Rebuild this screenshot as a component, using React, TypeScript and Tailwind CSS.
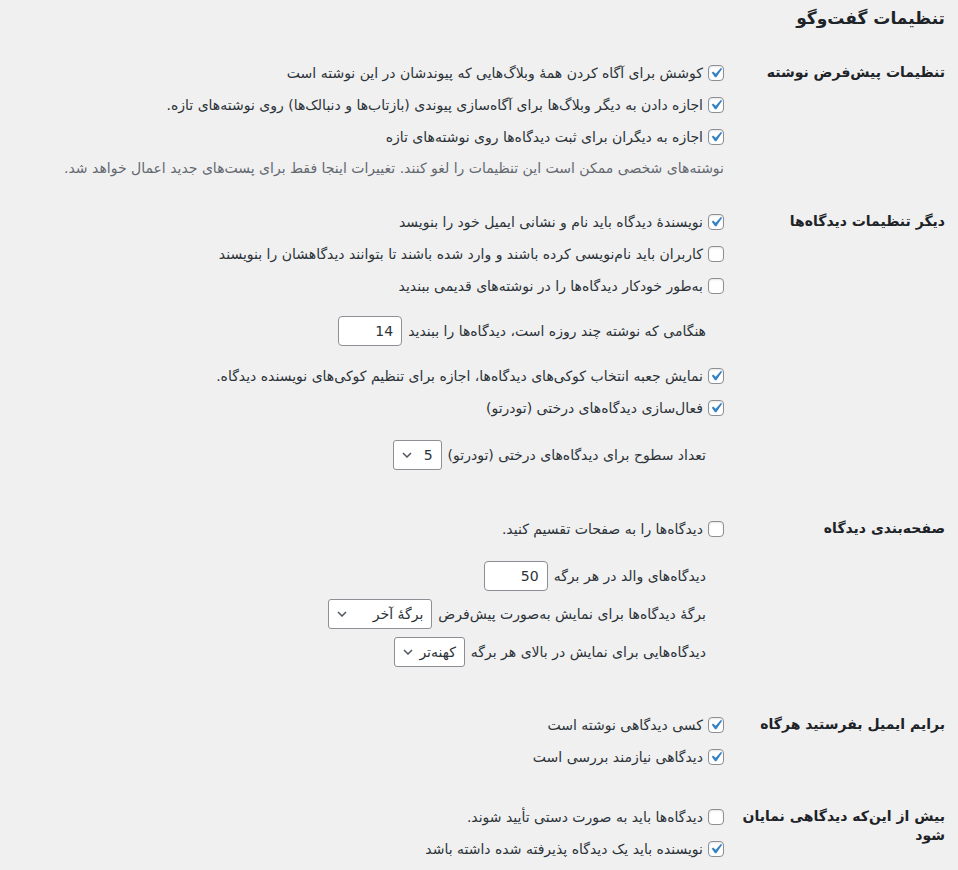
import React from 'react'

type Row =
  | { kind: 'check'; checked: boolean; text: string }
  | { kind: 'desc'; text: string }
  | { kind: 'input'; text: string; value: string }
  | { kind: 'select'; text: string; value: string; width: string }

function Checkbox({ checked }: { checked: boolean }) {
  return (
    <span className="relative w-4 h-4 shrink-0 rounded-[4px] border border-[#8c8f94] bg-white shadow-[inset_0_1px_2px_rgba(0,0,0,0.1)]">
      {checked && (
        <svg viewBox="0 0 20 20" className="absolute -top-[3px] -left-[3px] w-[20px] h-[20px]">
          <path d="M14.83 4.89l1.34.94-5.81 8.38H9.02L5.78 9.67l1.34-1.25 2.57 2.4z" fill="#3582c4" />
        </svg>
      )}
    </span>
  )
}

function Chevron() {
  return (
    <svg viewBox="0 0 10 6" className="w-[10px] h-[6px] shrink-0">
      <path d="M1 1l4 4 4-4" fill="none" stroke="#50575e" strokeWidth="1.5" />
    </svg>
  )
}

function Field({ row }: { row: Row }) {
  if (row.kind === 'check') {
    return (
      <div className="h-8 flex items-center gap-[5px]">
        <Checkbox checked={row.checked} />
        <span>{row.text}</span>
      </div>
    )
  }
  if (row.kind === 'desc') {
    return <div className="h-[30px] flex items-center text-[#646970]">{row.text}</div>
  }
  if (row.kind === 'input') {
    return (
      <div className="flex items-center gap-[6px] pr-[18px]">
        <span>{row.text}</span>
        <div className="w-[64px] h-[30px] px-2 flex items-center rounded-[4px] border border-[#8c8f94] bg-white text-[14px] text-[#2c3338]">
          {row.value}
        </div>
      </div>
    )
  }
  return (
    <div className="flex items-center gap-[6px] pr-[18px]">
      <span>{row.text}</span>
      <div className={`${row.width} h-[30px] pr-2 pl-[8px] flex items-center justify-between rounded-[3px] border border-[#8c8f94] bg-white text-[14px] text-[#2c3338]`}>
        <span>{row.value}</span>
        <Chevron />
      </div>
    </div>
  )
}

function Section({ label, className, children }: { label: string; className: string; children: React.ReactNode }) {
  return (
    <div className={`flex ${className}`}>
      <div className="w-[221px] shrink-0 pt-[6px] pl-4 text-[14px] leading-[19px] font-bold text-[#1d2327]">{label}</div>
      <div className="flex-1 flex flex-col">{children}</div>
    </div>
  )
}

export default function App() {
  return (
    <div dir="rtl" className="min-h-[870px] bg-[#f0f0f1] pr-[13px] font-['DejaVu_Sans',sans-serif] text-[14px] text-[#2c3338]">
      <h1 className="pt-[3px] h-[57px] text-[17px] leading-[30px] font-bold text-[#1d2327]">تنظیمات گفت‌وگو</h1>

      <Section label="تنظیمات پیش‌فرض نوشته" className="">
        <Field row={{ kind: 'check', checked: true, text: 'کوشش برای آگاه کردن همهٔ وبلاگ‌هایی که پیوندشان در این نوشته است' }} />
        <Field row={{ kind: 'check', checked: true, text: 'اجازه دادن به دیگر وبلاگ‌ها برای آگاه‌سازی پیوندی (بازتاب‌ها و دنبالک‌ها) روی نوشته‌های تازه.' }} />
        <Field row={{ kind: 'check', checked: true, text: 'اجازه به دیگران برای ثبت دیدگاه‌ها روی نوشته‌های تازه' }} />
        <Field row={{ kind: 'desc', text: 'نوشته‌های شخصی ممکن است این تنظیمات را لغو کنند. تغییرات اینجا فقط برای پست‌های جدید اعمال خواهد شد.' }} />
      </Section>

      <Section label="دیگر تنظیمات دیدگاه‌ها" className="mt-[23px]">
        <Field row={{ kind: 'check', checked: true, text: 'نویسندهٔ دیدگاه باید نام و نشانی ایمیل خود را بنویسد' }} />
        <Field row={{ kind: 'check', checked: false, text: 'کاربران باید نام‌نویسی کرده باشند و وارد شده باشند تا بتوانند دیدگاهشان را بنویسند' }} />
        <Field row={{ kind: 'check', checked: false, text: 'به‌طور خودکار دیدگاه‌ها را در نوشته‌های قدیمی ببندید' }} />
        <div className="pt-[14px] pb-[14px]">
          <Field row={{ kind: 'input', text: 'هنگامی که نوشته چند روزه است، دیدگاه‌ها را ببندید', value: '14' }} />
        </div>
        <Field row={{ kind: 'check', checked: true, text: 'نمایش جعبه انتخاب کوکی‌های دیدگاه‌ها، اجازه برای تنظیم کوکی‌های نویسنده دیدگاه.' }} />
        <Field row={{ kind: 'check', checked: true, text: 'فعال‌سازی دیدگاه‌های درختی (تودرتو)' }} />
        <div className="pt-[16px]">
          <Field row={{ kind: 'select', text: 'تعداد سطوح برای دیدگاه‌های درختی (تودرتو)', value: '5', width: 'w-[49px]' }} />
        </div>
      </Section>

      <Section label="صفحه‌بندی دیدگاه" className="mt-[43px]">
        <Field row={{ kind: 'check', checked: false, text: 'دیدگاه‌ها را به صفحات تقسیم کنید.' }} />
        <div className="pt-[16px] flex flex-col gap-2">
          <Field row={{ kind: 'input', text: 'دیدگاه‌های والد در هر برگه', value: '50' }} />
          <Field row={{ kind: 'select', text: 'برگهٔ دیدگاه‌ها برای نمایش به‌صورت پیش‌فرض', value: 'برگهٔ آخر', width: 'w-[104px]' }} />
          <Field row={{ kind: 'select', text: 'دیدگاه‌هایی برای نمایش در بالای هر برگه', value: 'کهنه‌تر', width: 'w-[71px]' }} />
        </div>
      </Section>

      <Section label="برایم ایمیل بفرستید هرگاه" className="mt-[42px]">
        <Field row={{ kind: 'check', checked: true, text: 'کسی دیدگاهی نوشته است' }} />
        <Field row={{ kind: 'check', checked: true, text: 'دیدگاهی نیازمند بررسی است' }} />
      </Section>

      <Section label="بیش از این‌که دیدگاهی نمایان شود" className="mt-[28px]">
        <Field row={{ kind: 'check', checked: false, text: 'دیدگاه‌ها باید به صورت دستی تأیید شوند.' }} />
        <Field row={{ kind: 'check', checked: true, text: 'نویسنده باید یک دیدگاه پذیرفته شده داشته باشد' }} />
      </Section>
    </div>
  )
}
